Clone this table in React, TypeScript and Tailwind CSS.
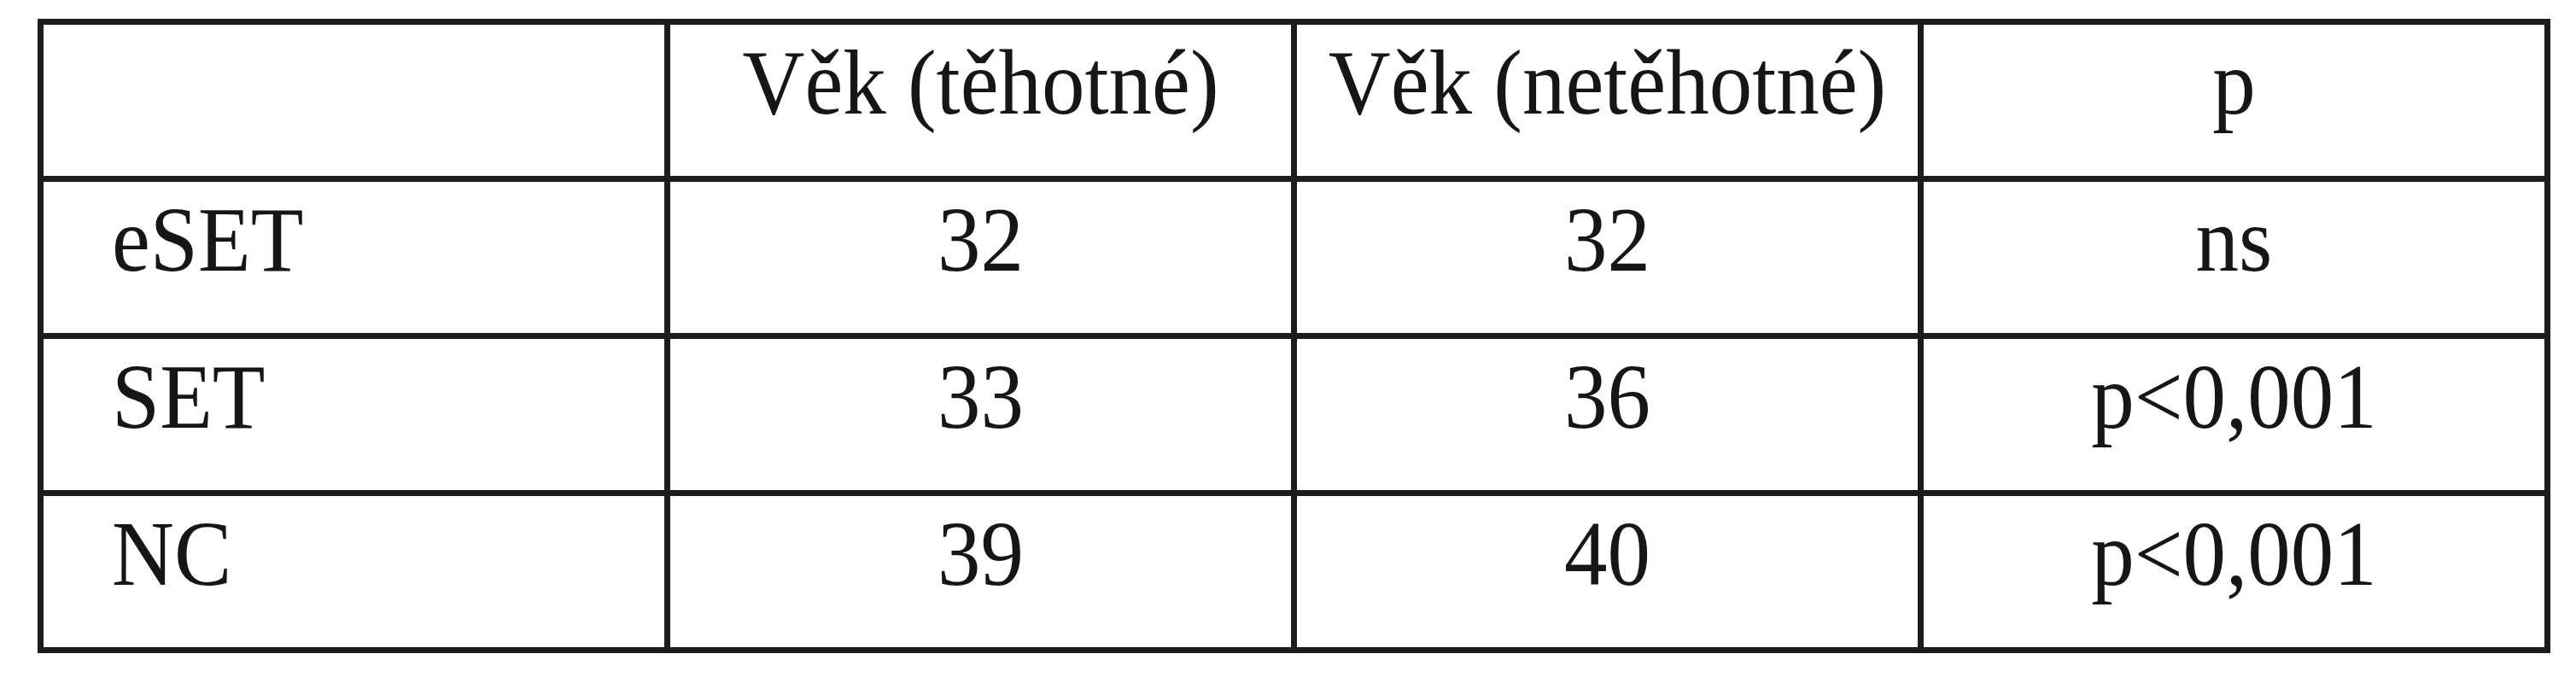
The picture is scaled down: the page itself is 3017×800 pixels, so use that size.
import React from "react";

const header = ["", "Věk (těhotné)", "Věk (netěhotné)", "p"];

const rows = [
  ["eSET", "32", "32", "ns"],
  ["SET", "33", "36", "p<0,001"],
  ["NC", "39", "40", "p<0,001"],
];

function Cell({ text, first }: { text: string; first: boolean }) {
  return (
    <div
      className={`bg-white h-[177px] flex items-start pt-[10px] ${
        first ? "justify-start pl-[80px]" : "justify-center"
      }`}
    >
      <span className="block text-[101px] leading-[1.15] text-[#161616] scale-y-[1.07] whitespace-nowrap">
        {text}
      </span>
    </div>
  );
}

export default function App() {
  const all = [header, ...rows];

  return (
    <div className="w-[3017px] h-[800px] bg-white pt-[22px] pl-[44px] font-['Liberation_Serif','Times_New_Roman',serif]">
      <div className="w-[2943px] grid grid-cols-4 gap-[7px] p-[7px] bg-[#1c1c1c]">
        {all.map((row, r) =>
          row.map((cell, c) => <Cell key={`${r}-${c}`} text={cell} first={c === 0} />)
        )}
      </div>
    </div>
  );
}
